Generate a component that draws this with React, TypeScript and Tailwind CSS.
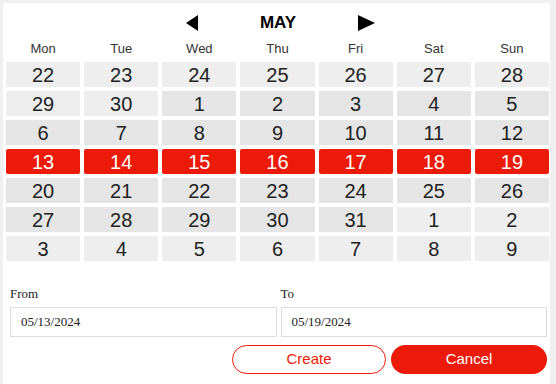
const days = ["Mon", "Tue", "Wed", "Thu", "Fri", "Sat", "Sun"];

type Cell = { n: number; inMonth: boolean; selected: boolean };

function buildCells(): Cell[] {
  const cells: Cell[] = [];
  for (let n = 22; n <= 30; n++) cells.push({ n, inMonth: false, selected: false });
  for (let n = 1; n <= 31; n++) cells.push({ n, inMonth: true, selected: n >= 13 && n <= 19 });
  for (let n = 1; n <= 9; n++) cells.push({ n, inMonth: false, selected: false });
  return cells;
}

export default function App() {
  const cells = buildCells();
  return (
    <div className="w-[556px] h-[384px] bg-[#f0f0f0] pl-[3px] pt-[3px] pr-[6px] overflow-hidden">
      <div className="w-[547px] h-full bg-white" style={{ fontFamily: '"Liberation Sans", Arial, sans-serif' }}>
        {/* Month header */}
        <div className="h-[32px] pt-[7px] flex items-center justify-center gap-[62px] pl-[8px]">
          <svg width="12" height="16" viewBox="0 0 12 16">
            <polygon points="12,0 12,16 0,8" fill="#000" />
          </svg>
          <span className="text-[17px] font-bold text-black">MAY</span>
          <svg width="17" height="16" viewBox="0 0 17 16">
            <polygon points="0,0 0,16 17,8" fill="#000" />
          </svg>
        </div>

        {/* Day names */}
        <div className="ml-[3px] w-[543px] grid grid-cols-7 gap-x-[4px] h-[27px] items-center">
          {days.map((d) => (
            <div key={d} className="text-center text-[13px] text-[#333]">
              {d}
            </div>
          ))}
        </div>

        {/* Days grid */}
        <div className="ml-[3px] w-[543px] grid grid-cols-7 gap-x-[4px] gap-y-[4px]">
          {cells.map((c, i) => (
            <div
              key={i}
              className={
                c.selected
                  ? "h-[25px] flex items-center justify-center text-[20px] bg-[#ec1a08] text-white rounded-[2px]"
                  : c.inMonth
                  ? "h-[25px] flex items-center justify-center text-[20px] bg-[#e5e5e5] text-[#222]"
                  : "h-[25px] flex items-center justify-center text-[20px] bg-[#eeeeee] text-[#222]"
              }
            >
              {c.n}
            </div>
          ))}
        </div>

        {/* Range inputs */}
        <div
          className="ml-[7px] w-[537px] mt-[25px] flex gap-[4px]"
          style={{ fontFamily: '"Liberation Serif", "Times New Roman", serif' }}
        >
          <div className="flex-1">
            <div className="text-[13px] text-[#222] h-[16px] leading-[16px]">From</div>
            <div className="mt-[5px] h-[30px] border border-[#dddddd] flex items-center px-[10px] text-[13px] text-[#222]">
              05/13/2024
            </div>
          </div>
          <div className="flex-1">
            <div className="text-[13px] text-[#222] h-[16px] leading-[16px]">To</div>
            <div className="mt-[5px] h-[30px] border border-[#dddddd] flex items-center px-[10px] text-[13px] text-[#222]">
              05/19/2024
            </div>
          </div>
        </div>

        {/* Buttons */}
        <div className="mt-[8px] w-[544px] flex justify-end gap-[5px]">
          <button className="w-[154px] h-[29px] rounded-full border border-[#ec1a08] text-[#ec1a08] text-[15px] bg-white">
            Create
          </button>
          <button className="w-[156px] h-[29px] rounded-full bg-[#ec1a08] text-white text-[15px]">
            Cancel
          </button>
        </div>
      </div>
    </div>
  );
}
